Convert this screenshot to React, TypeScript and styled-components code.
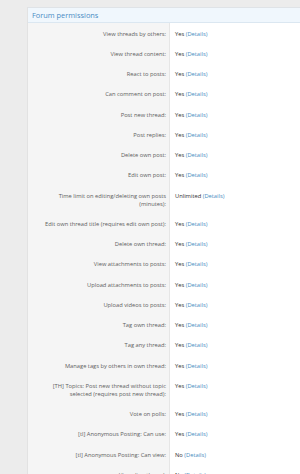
import React from "react";
import styled, { createGlobalStyle } from "styled-components";

const Global = createGlobalStyle`
  html, body { margin: 0; padding: 0; background: #ececec; }
  body { font-family: "Open Sans", "Noto Sans", sans-serif; }
`;

const Page = styled.div`
  padding: 7px 0 0 27px;
  height: 474px;
  overflow: hidden;
  box-sizing: border-box;
`;

const Panel = styled.div`
  background: #fff;
  border-top: 1px solid #dfe3e7;
  border-left: 1px solid #e2e2e2;
`;

const Header = styled.h2`
  margin: 0;
  height: 14.4px;
  padding: 0 4px;
  display: flex;
  align-items: center;
  font-size: 7.4px;
  font-weight: 400;
  color: #4a8cc4;
  background: #f0f7fd;
  border-bottom: 1px solid #dbe7f1;
`;

const Rows = styled.dl`
  margin: 0;
  display: grid;
  grid-template-columns: 142px 1fr;
`;

const Label = styled.dt`
  margin: 0;
  background: #f5f5f5;
  border-right: 1px solid #e6e6e6;
  padding: 6.13px 3px 6.13px 11px;
  text-align: right;
  font-size: 5.75px;
  line-height: 8px;
  color: #606060;
`;

const Value = styled.dd`
  margin: 0;
  padding: 6.13px 4px 6.13px 5px;
  font-size: 5.75px;
  line-height: 8px;
  color: #303030;
`;

const Link = styled.a`
  color: #4a8cc0;
  text-decoration: none;
`;

const rows: [string, string][] = [
  ["View threads by others:", "Yes"],
  ["View thread content:", "Yes"],
  ["React to posts:", "Yes"],
  ["Can comment on post:", "Yes"],
  ["Post new thread:", "Yes"],
  ["Post replies:", "Yes"],
  ["Delete own post:", "Yes"],
  ["Edit own post:", "Yes"],
  ["Time limit on editing/deleting own posts (minutes):", "Unlimited"],
  ["Edit own thread title (requires edit own post):", "Yes"],
  ["Delete own thread:", "Yes"],
  ["View attachments to posts:", "Yes"],
  ["Upload attachments to posts:", "Yes"],
  ["Upload videos to posts:", "Yes"],
  ["Tag own thread:", "Yes"],
  ["Tag any thread:", "Yes"],
  ["Manage tags by others in own thread:", "Yes"],
  ["[TH] Topics: Post new thread without topic selected (requires post new thread):", "Yes"],
  ["Vote on polls:", "Yes"],
  ["[tl] Anonymous Posting: Can use:", "Yes"],
  ["[tl] Anonymous Posting: Can view:", "No"],
  ["View directly and:", "No"],
];

export default function App() {
  return (
    <>
      <Global />
      <Page>
        <Panel>
          <Header>Forum permissions</Header>
          <Rows>
            {rows.map(([l, v], i) => (
              <React.Fragment key={i}>
                <Label>{l}</Label>
                <Value>
                  {v} <Link href="#">(Details)</Link>
                </Value>
              </React.Fragment>
            ))}
          </Rows>
        </Panel>
      </Page>
    </>
  );
}
